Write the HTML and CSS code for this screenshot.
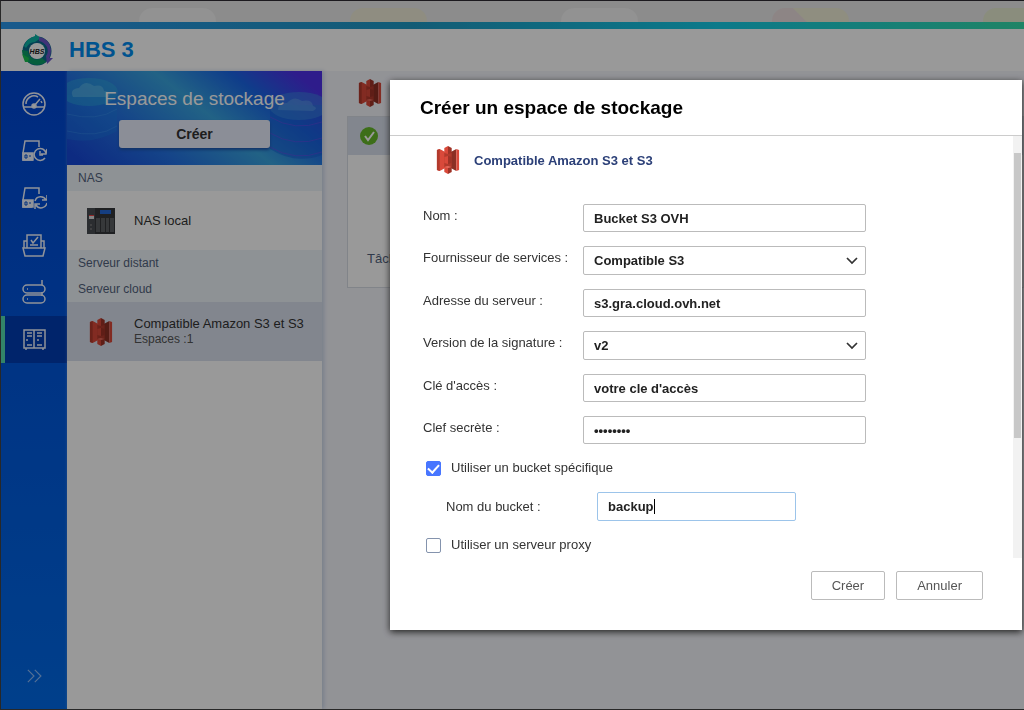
FILE: index.html
```html
<!DOCTYPE html>
<html lang="fr">
<head>
<meta charset="utf-8">
<title>HBS 3</title>
<link rel="stylesheet" href="styles.css">
</head>
<body>
<svg class="defs" aria-hidden="true">
  <symbol id="s3" viewBox="-1 0 26 28" preserveAspectRatio="none">
    <path fill="#d9493a" d="M0 4l3-1 6 3v16l-6 3-3-1z"/>
    <path fill="#b23a2c" d="M0 4l3-1v22l-3-1z"/>
    <path fill="#8c2f24" d="M15 6l6-3v22l-6-3z"/>
    <path fill="#d9493a" d="M21 3l3 1v20l-3 1z"/>
    <path fill="#b23a2c" d="M8 7l4-1 4 1v14l-4 1-4-1z"/>
    <path fill="#d9493a" d="M8 2l4-2v8l-4-1zM8 11l4-1v8l-4-1zM8 21l4-1v8l-4-2z"/>
    <path fill="#9e3327" d="M12 0l4 2v5l-4 1zM12 10l4 1v6l-4 1zM12 20l4 1v5l-4 2z"/>
    <path fill="#e66a5c" d="M8 21l4-1 4 1-4 1z"/>
  </symbol>
</svg>

<div class="app">
  <div class="desktop-tabs"><span class="cloud"></span><span class="cloud cream"></span><span class="cloud"></span><span class="cloud rose"></span><span class="cloud lime"></span></div>
  <div class="strip"></div>
  <header class="header">
    <svg class="logo" viewBox="0 0 32 32" aria-hidden="true">
      <circle cx="16" cy="17" r="11" fill="none" stroke="#0a6c8c" stroke-width="7"/>
      <path d="M3 12Q6 4 14 2l0-2 6 4-6 4Q8 8 5 14z" fill="#0cb2a6"/>
      <path d="M18 3q11 2 12 13 0 5-2 8l4 0-6 6-1-8q3-4 1-9-3-5-8-6z" fill="#6b55c8"/>
      <path d="M1 16q1 13 14 15 6 0 10-3l-4-4q-6 3-10 0-4-3-4-7z" fill="#0b9d66"/>
      <path d="M1 20l3 8 3 0 1-4z" fill="#18c24d"/>
      <circle cx="16" cy="17" r="8" fill="#fff"/>
      <text x="16" y="20" text-anchor="middle" class="logo-text">HBS</text>
    </svg>
    <h1 class="app-name">HBS 3</h1>
  </header>
  <div class="workspace">
    <nav class="rail">
      <button class="rail-item" aria-label="Vue d'ensemble"><svg class="rail-icon" viewBox="0 0 26 26"><circle cx="13" cy="13" r="11"/><path d="M2 16h22M5 13a8 8 0 0 1 12-7M13 15l6-7M20 10l1 2"/><circle cx="13" cy="15" r="2" fill="#fff"/></svg></button>
      <button class="rail-item" aria-label="Sauvegarde"><svg class="rail-icon" viewBox="0 0 26 26"><path d="M18 9V3H4L2 15v7h10"/><path d="M2 15h10v7H2z" class="drive"/><path d="M4 17h2v3H4zM8 18h2" class="drive-mark"/><path d="M24 20a6 6 0 1 1 1-5M26 11l-1 5h-5M19 13v4h3"/></svg></button>
      <button class="rail-item" aria-label="Synchronisation"><svg class="rail-icon" viewBox="0 0 26 26"><path d="M18 9V3H4L2 15v7h9"/><path d="M2 15h10v7H2z" class="drive"/><path d="M4 17h2v3H4zM8 18h2" class="drive-mark"/><path d="M14 16a6 6 0 0 1 11-1M26 10v5h-5M26 18a6 6 0 0 1-11 2M14 24v-5h5"/></svg></button>
      <button class="rail-item" aria-label="Restauration"><svg class="rail-icon" viewBox="0 0 26 26"><path d="M2 16h22l-2 8H4zM6 16V3h14v13M6 9H3v7M20 9h3v7M9 13h8M10 8l2 3 5-6"/></svg></button>
      <button class="rail-item" aria-label="Services"><svg class="rail-icon" viewBox="0 0 26 26"><rect x="2" y="6" width="22" height="8" rx="4"/><rect x="2" y="16" width="22" height="8" rx="4"/><path d="M21 6V1M21 13v4M6 10h1M6 20h1"/></svg></button>
      <button class="rail-item active" aria-label="Espaces de stockage"><svg class="rail-icon" viewBox="0 0 26 26"><path d="M3 4h21v18H3zM13 4v18M6 7h5M6 10h5M16 7h5M16 10h5M6 19h5M16 19h5M5 14h2M16 14h2M5 22v2M22 22v2"/></svg></button>
      <button class="rail-item expand" aria-label="Développer"><svg class="rail-icon" viewBox="0 0 26 26"><path d="M5 5l8 8-8 8M14 5l8 8-8 8"/></svg></button>
    </nav>
    <aside class="panel">
      <div class="banner">
        <svg class="banner-art" viewBox="0 0 255 94" preserveAspectRatio="none" aria-hidden="true">
          <path d="M0 24h50v36q-24 14-50 8z" fill="#1783e8" opacity=".3"/>
          <ellipse cx="22" cy="21" rx="29" ry="14" fill="#2fb4dc" opacity=".4"/>
          <path d="M0 43q30 8 50-5M0 60q30 8 50-5" fill="none" stroke="#4ba6f5" opacity=".3"/>
          <path d="M6 26q-4-8 6-9 6-9 15-2 9-2 10 5 9 1 4 6z" fill="#79cdea" opacity=".4"/>
          <path d="M203 34v44q25 16 52 6V34z" fill="#155dd8" opacity=".5"/>
          <ellipse cx="232" cy="35" rx="30" ry="14" fill="#3c8ce2" opacity=".5"/>
          <path d="M203 46q25 15 52 5M203 62q25 15 52 5M203 76q25 15 52 5" fill="none" stroke="#624be8" opacity=".6"/>
          <path d="M211 39q0-8 9-7 7-8 15-2 10-2 11 5 6 2 0 5z" fill="#74b7ee" opacity=".35"/>
        </svg>
        <h2 class="banner-title">Espaces de stockage</h2>
        <button class="banner-button">Créer</button>
      </div>
      <h3 class="group">NAS</h3>
      <div class="entry">
        <svg class="nas" viewBox="0 0 28 26" aria-hidden="true"><path fill="#343639" d="M0 0h28v26H0z"/><path fill="#484b50" d="M0 0h8v26H0z"/><path fill="#2368d8" d="M13 2h11v4H13z"/><path fill="#ddd" d="M2 7h5v4H2z"/><path fill="#e44" d="M2 7h5v1H2z"/><path fill="#5b5e62" d="M9 10h4v14H9zM14 10h4v14h-4zM19 10h3v14h-3zM23 10h4v14h-4z"/><circle cx="4" cy="17" r="1" fill="#777"/><circle cx="4" cy="21" r="1" fill="#777"/></svg>
        <span class="entry-text">NAS local</span>
      </div>
      <h3 class="group">Serveur distant</h3>
      <h3 class="group">Serveur cloud</h3>
      <div class="entry selected">
        <svg class="s3-icon" aria-hidden="true"><use href="#s3"/></svg>
        <span class="entry-text">Compatible Amazon S3 et S3<small class="entry-sub">Espaces :1</small></span>
      </div>
    </aside>
    <main class="content">
      <svg class="s3-icon content-icon" aria-hidden="true"><use href="#s3"/></svg>
      <section class="card">
        <div class="card-head"><svg class="ok" viewBox="0 0 18 18" aria-hidden="true"><circle cx="9" cy="9" r="9" fill="#66b82b"/><path d="M5 9l3 4 6-8" fill="none" stroke="#fff" stroke-width="2"/></svg></div>
        <p class="card-text">Tâches</p>
      </section>
    </main>
  </div>
</div>

<div class="overlay">
  <form class="dialog" role="dialog" aria-labelledby="dialog-title">
    <h2 class="dialog-title" id="dialog-title">Créer un espace de stockage</h2>
    <div class="dialog-main">
      <div class="dialog-body">
        <div class="provider"><svg class="s3-icon" aria-hidden="true"><use href="#s3"/></svg><strong class="provider-name">Compatible Amazon S3 et S3</strong></div>
        <div class="fields">
          <label for="name">Nom :</label><input class="field" id="name" type="text" value="Bucket S3 OVH">
          <label for="vendor">Fournisseur de services :</label><select class="field select" id="vendor"><option>Compatible S3</option></select>
          <label for="server">Adresse du serveur :</label><input class="field" id="server" type="text" value="s3.gra.cloud.ovh.net">
          <label for="signature">Version de la signature :</label><select class="field select" id="signature"><option>v2</option></select>
          <label for="access">Clé d'accès :</label><input class="field" id="access" type="text" value="votre cle d'accès">
          <label for="secret">Clef secrète :</label><input class="field" id="secret" type="password" value="password">
        </div>
        <label class="check"><input class="tick" type="checkbox" checked>Utiliser un bucket spécifique</label>
        <div class="bucket"><label for="bucket">Nom du bucket :</label><div class="bucket-box"><input class="field focused" id="bucket" type="text" value="backup"><span class="caret"></span></div></div>
        <label class="check"><input class="tick" type="checkbox">Utiliser un serveur proxy</label>
      </div>
      <div class="scrollbar"><div class="thumb"></div></div>
    </div>
    <div class="actions"><button class="action" type="button">Créer</button><button class="action" type="button">Annuler</button></div>
  </form>
</div>
</body>
</html>
```

FILE: styles.css
```css
* { box-sizing: border-box; }
body { margin: 0; font-family: "Liberation Sans", Arial, sans-serif; font-size: 13px; color: #333; }
h1, h2, h3, p { margin: 0; font-weight: normal; }
button, input, select { font-family: inherit; margin: 0; }
.defs { position: absolute; width: 0; height: 0; }

.app { height: 100vh; display: flex; flex-direction: column; overflow: hidden; border: 1px solid #444; border-top-color: #302c34; border-right: 0; }
.desktop-tabs { height: 21px; display: flex; gap: 134px; padding: 7px 0 0 138px; background: #e9e9e9; overflow: hidden; }
.cloud { flex: none; width: 77px; height: 26px; border-radius: 26px; background: #f3f3f3; }
.cream { background: #eeecd8; }
.rose { background: linear-gradient(45deg, #ecdede 45%, #eeedd6 46%); }
.lime { background: #e7ecd0; }
.strip { height: 7px; background: linear-gradient(90deg, #2b96ea, #2099c4 40%, #14cbe6 70%, #35dcaa); }
.header { height: 42px; display: flex; align-items: center; gap: 16px; padding-left: 20px; background: #fff; }
.logo { width: 32px; height: 32px; }
.logo-text { font: italic bold 7px "Liberation Sans", Arial, sans-serif; fill: #222; }
.app-name { font-size: 22px; font-weight: bold; color: #008aee; }
.workspace { flex: 1; display: flex; min-height: 0; }

.rail { width: 66px; display: flex; flex-direction: column; padding-top: 10px; background: linear-gradient(#0047d3, #006ae8); }
.rail-item { height: 47px; display: flex; align-items: center; justify-content: center; padding: 0 0 2px; border: 0; background: none; }
.rail-item.active { background: #003cb3; box-shadow: inset 4px 0 #56dcae; }
.rail-item.expand { margin: auto 0 10px; padding: 0; }
.rail-icon { width: 26px; height: 26px; fill: none; stroke: #f0f5ff; stroke-width: 1.500; }
.drive { fill: #f0f5ff; }
.drive-mark { stroke: #0050d4; stroke-width: 1; }
.expand .rail-icon { width: 20px; height: 20px; stroke: #8cbaf7; }

.panel { width: 255px; background: #fff; z-index: 1; box-shadow: 2px 0 4px #c8d4e8; }
.banner { height: 94px; position: relative; display: flex; flex-direction: column; align-items: center; padding-top: 16px; gap: 10px; background: linear-gradient(38deg, #1748d8 5%, #2372e4 30%, #39a4de 55%, #1a66e6 75%, #4d30e8 92%); }
.banner-art { position: absolute; inset: 0; width: 100%; height: 100%; }
.banner-title { position: relative; font-size: 19px; line-height: 23px; color: #fff; }
.banner-button { position: relative; width: 151px; height: 28px; border: 0; border-radius: 3px; background: #e8edfc; box-shadow: 0 2px 3px #1d55ad; font-size: 14px; font-weight: bold; color: #333; }
.group { height: 26px; line-height: 26px; padding-left: 11px; background: #edf4f8; font-size: 12px; color: #52627d; }
.entry { height: 59px; display: flex; align-items: center; padding-left: 20px; font-size: 13px; color: #333; }
.entry.selected { background: #d9e0ed; }
.nas { width: 28px; height: 26px; margin-right: 19px; }
.s3-icon { flex: none; width: 24px; height: 28px; }
.entry .s3-icon { margin: 0 21px 0 2px; }
.entry-sub { display: block; font-size: 12px; line-height: 16px; color: #555; }

.content { flex: 1; padding: 8px 0 0 25px; background: #f4f5fb; }
.content-icon { display: block; margin-left: 11px; }
.card { margin-top: 9px; border: 1px solid #d8dce4; background: #fff; }
.card-head { height: 38px; display: flex; align-items: center; padding-left: 12px; background: #d9e0ed; }
.ok { width: 18px; height: 18px; }
.card-text { padding: 95px 0 20px 19px; line-height: 17px; font-size: 13px; color: #52627d; }

.overlay { position: fixed; inset: 0; z-index: 10; display: flex; align-items: flex-start; padding: 80px 2px 0 390px; background: rgba(0, 0, 0, .4); }
.dialog { flex: 1; min-width: 0; padding-bottom: 30px; background: #fff; box-shadow: 0 2px 7px #222; }
.dialog-title { height: 56px; line-height: 55px; padding-left: 30px; border-bottom: 1px solid #ccc; font-size: 19px; font-weight: bold; color: #000; }
.dialog-main { display: flex; }
.dialog-body { flex: 1; padding: 10px 33px 5px; }
.provider { display: flex; align-items: center; gap: 14px; padding-left: 13px; }
.provider-name { color: #2c4078; }
.fields { display: grid; grid-template-columns: 160px 283px; row-gap: 14px; padding-top: 30px; font-size: 13px; line-height: 24px; }
.field { width: 100%; height: 28px; padding: 0 10px; border: 1px solid #bbb; border-radius: 2px; background: #fff; font-size: 13px; font-weight: bold; color: #222; outline: 0; }
.select { height: 29px; appearance: none; background: #fff url("data:image/svg+xml,%3Csvg xmlns='http://www.w3.org/2000/svg' width='12' height='8'%3E%3Cpath d='M1 1l5 5 5-5' fill='none' stroke='%23333' stroke-width='1.700'/%3E%3C/svg%3E") no-repeat right 7px center; }
.check { display: flex; align-items: center; gap: 10px; padding: 16px 0 0 3px; line-height: 16px; }
.tick { appearance: none; width: 15px; height: 15px; display: grid; place-items: center; border: 1px solid #8493ad; border-radius: 2px; background: #fff; }
.tick:checked { border-color: #4876ff; background: #4876ff; }
.tick:checked::after { content: ""; width: 5px; height: 9px; border: solid #fff; border-width: 0 2px 2px 0; transform: translateY(-1px) rotate(42deg); }
.bucket { display: grid; grid-template-columns: 151px 199px; align-items: center; padding: 16px 0 0 23px; }
.bucket-box { position: relative; }
.bucket .field { display: block; height: 29px; }
.focused { border-color: #9cc4ea; }
.caret { position: absolute; left: 57px; top: 7px; width: 1px; height: 15px; background: #000; }
.scrollbar { width: 9px; padding-top: 17px; background: #f2f2f2; }
.thumb { height: 285px; margin: 0 1px; background: #c8c8c8; }
.actions { display: flex; justify-content: flex-end; gap: 11px; padding: 13px 39px 0 0; }
.action { height: 29px; padding: 0 20px; border: 1px solid #bbb; border-radius: 2px; background: #fff; font-size: 13px; color: #555; }
```
